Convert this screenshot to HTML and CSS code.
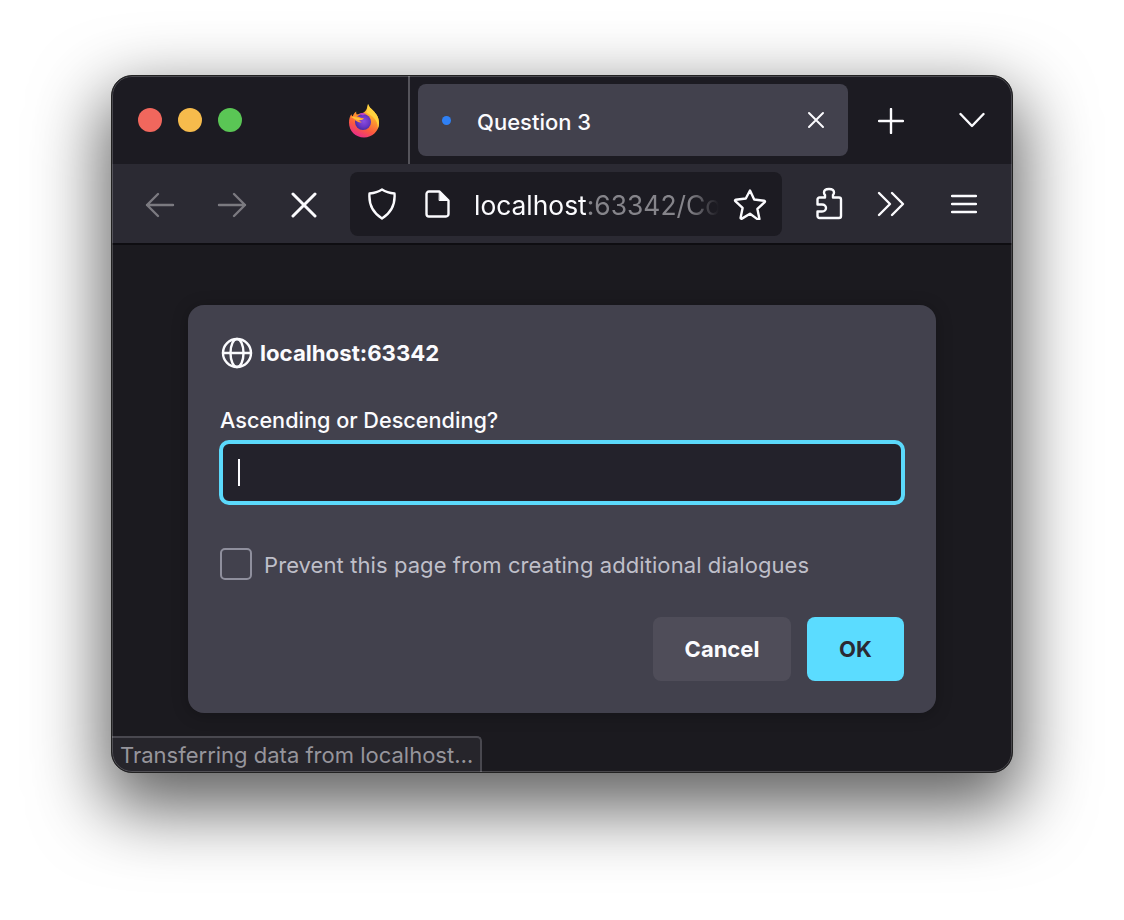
FILE: index.html
```html
<!DOCTYPE html>
<html>
  <head>
    <meta charset="utf-8" />
    <title>Question 3</title>
    <meta name="viewport" content="width=device-width, initial-scale=1.0" />
    <link rel="stylesheet" href="styles.css">
  </head>
  <body>
    <div class="window">
      <div class="tabbar">
        <div class="lights">
          <span class="light red"></span>
          <span class="light yellow"></span>
          <span class="light green"></span>
        </div>
        <svg class="logo" width="32" height="34" viewBox="0 0 32 34">
          <defs>
            <linearGradient id="fxbody" x1="0.75" y1="0" x2="0.3" y2="1">
              <stop offset="0" stop-color="#ffe14a"/>
              <stop offset="0.35" stop-color="#ffa42c"/>
              <stop offset="0.7" stop-color="#fb5a3e"/>
              <stop offset="1" stop-color="#e8298f"/>
            </linearGradient>
            <radialGradient id="fxglobe" cx="0.55" cy="0.45" r="0.6">
              <stop offset="0" stop-color="#8a4ee0"/>
              <stop offset="0.6" stop-color="#6a35c4"/>
              <stop offset="1" stop-color="#3a2b9c"/>
            </radialGradient>
          </defs>
          <path fill="url(#fxbody)" d="M20 0c1 3 3 4.500 5 6.500 3.500 3.500 6 7 6 12.500 0 8-6.500 14.500-15 14.500S1 27 1 18.500c0-3 .8-6 2.300-8.200.2 1 .7 1.800 1.300 2.400.6-2 1.900-4.100 3.600-5.300-.2 1.300 0 2.300.6 3 3.500-.5 7-1 9.200-4.200C19.300 4.200 19.500 2 20 0z"/>
          <path fill="#ffd23f" d="M20 0c1 3 3 4.500 5 6.500 3.500 3.500 6 7 6 12.500 0 2-.4 4-1.200 5.700.3-4.700-1.400-8.700-4.800-11.700-2.200-2-4.600-3.400-6.600-4.600C20 6 19.300 3 20 0z"/>
          <circle cx="15" cy="18" r="8" fill="url(#fxglobe)"/>
          <path fill="#ff9a2e" d="M2.500 12.500c3-.8 5.500-.8 8 .3 2 .8 3.500 1.500 5.700 1.200-1.500 1.800-3.600 2.300-5.200 2.300 1 1 2 1.600 3 2-3 .5-6-.8-7.700-3-.8-1-2.300-2-3.800-2.800z"/>
          <path fill="#ffc23a" d="M3 13c3 0 6 .3 8.500 1.300 1.500.6 2.500.9 4 .9-2 1-5 1-7.500.2-1.700-.6-3.500-1.500-5-2.400z"/>
          <path fill="#c23ac8" d="M11 9.800c2-1 5-1 7 .2-1.500.2-2.200.8-3 1.600-1.500-.8-2.800-1.400-4-1.800z"/>
        </svg>
        <span class="divider"></span>
        <div class="tab">
          <span class="tab-dot"></span>
          <span class="tab-title">Question 3</span>
          <svg class="tab-close" width="18" height="18" viewBox="0 0 18 18"><path d="M2 2l14 14M16 2L2 16"/></svg>
        </div>
        <div class="tab-new">
          <svg width="26" height="26" viewBox="0 0 26 26"><path d="M1 13h24M13 1v24"/></svg>
        </div>
        <div class="tab-list">
          <svg width="26" height="16" viewBox="0 0 26 16"><path d="M1.500 2l11.500 12L24.500 2"/></svg>
        </div>
      </div>

      <div class="toolbar">
        <div class="tool off">
          <svg width="30" height="26" viewBox="0 0 30 26"><path d="M28 13H2M13 2L2 13l11 11"/></svg>
        </div>
        <div class="tool off">
          <svg width="30" height="26" viewBox="0 0 30 26"><path d="M2 13h26M17 2l11 11-11 11"/></svg>
        </div>
        <div class="tool">
          <svg class="thick" width="26" height="26" viewBox="0 0 26 26"><path d="M2 2l22 22M24 2L2 24"/></svg>
        </div>
        <div class="urlbar">
          <svg class="url-shield" width="30" height="32" viewBox="0 0 30 32"><path d="M15 1.500c3.500 2.300 7.500 3.500 12.500 4 .8 10-2.500 18.800-12.500 25C5 24.300 1.700 15.500 2.500 5.500c5-.5 9-1.700 12.500-4z"/></svg>
          <svg class="url-page" width="26" height="28" viewBox="0 0 26 28"><path d="M4 1.500h10.500l9 9V24a2.500 2.500 0 0 1-2.500 2.500H4A2.500 2.500 0 0 1 1.500 24V4A2.500 2.500 0 0 1 4 1.500z"/><path class="fold" d="M14.500 1.500l9 9h-9z"/></svg>
          <div class="url-text">localhost<span class="url-dim">:63342/Co</span></div>
          <svg class="url-star" width="34" height="32" viewBox="0 0 34 32"><path d="M17 2.500l4.200 9 10 1.200c.8.100 1 1 .5 1.500l-7.300 6.700 2 9.800c.1.800-.6 1.300-1.300 .9L17 25.700l-8.100 4.900c-.7.400-1.400-.1-1.300-.9l2-9.800-7.300-6.700c-.5-.5-.3-1.400.5-1.500l10-1.200z"/></svg>
        </div>
        <div class="tool puzzle">
          <svg width="28" height="34" viewBox="0 0 28 34"><path d="M4.500 10.500H10V8c-1-.8-1-1.500-1-2.500C9 3.500 11 2 14 2s5 1.500 5 3.500c0 1-.3 1.700-1 2.500v2.500h6a2 2 0 0 1 2 2V29a2 2 0 0 1-2 2H4.500a2 2 0 0 1-2-2v-4.500H7c2.500 0 4-1.700 4-3.500s-1.500-3.500-4-3.500H2.500v-5a2 2 0 0 1 2-2z"/></svg>
        </div>
        <div class="tool chevrons">
          <svg width="28" height="26" viewBox="0 0 28 26"><path d="M2 2l11 11L2 24M15 2l11 11-11 11"/></svg>
        </div>
        <div class="tool menu">
          <svg width="26" height="20" viewBox="0 0 26 20"><path d="M1 2h24M1 10h24M1 18h24"/></svg>
        </div>
      </div>

      <div class="content">
        <div class="dialog">
          <div class="dialog-head">
            <svg class="globe" width="32" height="32" viewBox="0 0 32 32"><circle cx="16" cy="16" r="14"/><ellipse cx="16" cy="16" rx="6.500" ry="14"/><path d="M2 16h28"/></svg>
            <span class="dialog-host">localhost:63342</span>
          </div>
          <div class="dialog-label">Ascending or Descending?</div>
          <div class="field"><span class="caret"></span></div>
          <div class="check-row">
            <span class="check"></span>
            <span class="check-text">Prevent this page from creating additional dialogues</span>
          </div>
          <div class="buttons">
            <button class="btn cancel">Cancel</button>
            <button class="btn ok">OK</button>
          </div>
        </div>
        <div class="status">Transferring data from localhost…</div>
      </div>
    </div>
  </body>
</html>
```

FILE: styles.css
```css
html, body {
  margin: 0;
  background: #fff;
}
body {
  padding: 75px 111px;
  height: 920px;
  box-sizing: border-box;
  overflow: hidden;
  font-family: Inter, "Liberation Sans", sans-serif;
  color: #fbfbfe;
}
svg {
  display: block;
  fill: none;
  stroke: #fbfbfe;
  stroke-width: 2.4;
  stroke-linecap: round;
  stroke-linejoin: round;
}

.window {
  width: 902px;
  height: 698px;
  box-sizing: border-box;
  border: 1px solid #222;
  border-radius: 21px;
  background: #1c1b22;
  overflow: hidden;
  display: flex;
  flex-direction: column;
  position: relative;
  box-shadow: 0 28px 70px 8px rgba(0, 0, 0, 0.62);
}
/* light rim just inside the frame */
.window::after {
  content: "";
  position: absolute;
  inset: 0;
  border: 1px solid rgba(255, 255, 255, 0.2);
  border-radius: 20px;
  pointer-events: none;
}

/* tab strip */
.tabbar {
  height: 88px;
  flex: none;
  display: flex;
  align-items: flex-start;
  padding-top: 8px;
  box-sizing: border-box;
  background: #1c1b22;
}
.lights {
  display: flex;
  gap: 16px;
  margin: 24px 0 0 26px;
}
.light {
  width: 24px;
  height: 24px;
  border-radius: 50%;
}
.red { background: #f1675d; }
.yellow { background: #f6bb4c; }
.green { background: #5ac655; }
.logo {
  stroke: none;
  margin: 20px 0 0 106px;
}
.divider {
  width: 2px;
  height: 88px;
  margin: -8px 0 0 28px;
  background: #55545b;
}
.tab {
  width: 430px;
  height: 72px;
  margin-left: 8px;
  border-radius: 8px;
  background: #42414d;
  display: flex;
  align-items: center;
  box-sizing: border-box;
  padding: 0 23px 0 24px;
}
.tab-dot {
  width: 9px;
  height: 9px;
  border-radius: 50%;
  background: #2f80f5;
}
.tab-title {
  margin-left: 26px;
  font-size: 22px;
  font-weight: 500;
  flex: 1;
  padding-top: 4px;
}
.tab-close {
  stroke-width: 2;
  margin-top: -1px;
}
.tab-new {
  margin: 24px 0 0 30px;
}
.tab-list {
  margin: 28px 0 0 55px;
}

/* nav bar */
.toolbar {
  height: 81px;
  flex: none;
  display: flex;
  align-items: flex-start;
  padding: 8px 0 0 12px;
  box-sizing: border-box;
  background: #2b2a33;
  border-bottom: 2px solid #0e0d11;
}
.tool {
  width: 72px;
  height: 64px;
  display: flex;
  align-items: center;
  justify-content: center;
  flex: none;
}
.off svg {
  stroke: #7b7a80;
  margin-top: 2px;
}
.thick {
  stroke-width: 3;
  margin-top: 2px;
}
.urlbar {
  width: 432px;
  height: 64px;
  margin-left: 10px;
  flex: none;
  border-radius: 8px;
  background: #1c1b22;
  display: flex;
  align-items: center;
  box-sizing: border-box;
  padding-left: 17px;
}
.url-page {
  margin-left: 28px;
}
.url-page .fold {
  fill: #fbfbfe;
  stroke-width: 1;
}
.url-text {
  margin-left: 23px;
  padding-top: 2px;
  width: 250px;
  flex: none;
  white-space: nowrap;
  font-size: 26.400px;
  -webkit-mask-image: linear-gradient(to right, #000 215px, transparent 245px);
  mask-image: linear-gradient(to right, #000 215px, transparent 245px);
}
.url-dim {
  color: #85848a;
}
.url-star {
  margin-left: 9px;
  flex: none;
}
.puzzle {
  width: 64px;
  margin-left: 15px;
}
.chevrons {
  width: 60px;
}
.menu {
  width: 68px;
  margin-left: 9px;
}

/* page area */
.content {
  flex: 1;
  position: relative;
  display: flex;
  justify-content: center;
  align-items: flex-start;
  padding-top: 60px;
  background: #1b1a1f;
}
.dialog {
  width: 748px;
  height: 408px;
  box-sizing: border-box;
  padding: 32px;
  border-radius: 16px;
  background: #42414d;
  box-shadow: 0 2px 16px rgba(0, 0, 0, 0.25);
}
.dialog-head {
  display: flex;
  align-items: center;
  gap: 7px;
  height: 32px;
  font-size: 22.200px;
  font-weight: 700;
}
.dialog-host {
  margin-top: -2px;
}
.globe {
  stroke-width: 2.400;
  margin-left: 1px;
}
.dialog-label {
  margin-top: 36px;
  height: 30px;
  line-height: 30px;
  font-size: 21.650px;
  font-weight: 500;
}
.field {
  height: 65px;
  margin: 5px -1px 0;
  box-sizing: border-box;
  border: 4px solid #5bd9fb;
  border-radius: 10px;
  background: #23222b;
  display: flex;
  align-items: center;
  padding-left: 15px;
}
.caret {
  width: 2px;
  height: 27px;
  background: #fbfbfe;
}
.check-row {
  display: flex;
  align-items: center;
  gap: 12px;
  margin-top: 43px;
  font-size: 22px;
  letter-spacing: 0.08px;
  color: #bfbfc9;
}
.check-text {
  padding-top: 2px;
}
.check {
  width: 32px;
  height: 32px;
  box-sizing: border-box;
  border: 2px solid #8f8f9d;
  border-radius: 5px;
  flex: none;
}
.buttons {
  display: flex;
  justify-content: flex-end;
  gap: 16px;
  margin-top: 37px;
}
.btn {
  height: 64px;
  border: none;
  border-radius: 8px;
  font-family: inherit;
  font-size: 22px;
  font-weight: 700;
}
.cancel {
  width: 138px;
  background: #4f4d59;
  color: #fbfbfe;
}
.ok {
  width: 97px;
  background: #5bdcff;
  color: #2b2a33;
}
.status {
  position: absolute;
  left: 0;
  bottom: 0;
  width: 370px;
  height: 36px;
  line-height: 35px;
  box-sizing: border-box;
  padding-left: 8px;
  background: #26252b;
  border: 2px solid #49484f;
  border-width: 2px 2px 0 0;
  border-top-right-radius: 5px;
  font-size: 22px;
  color: #96959c;
  white-space: nowrap;
}
```
